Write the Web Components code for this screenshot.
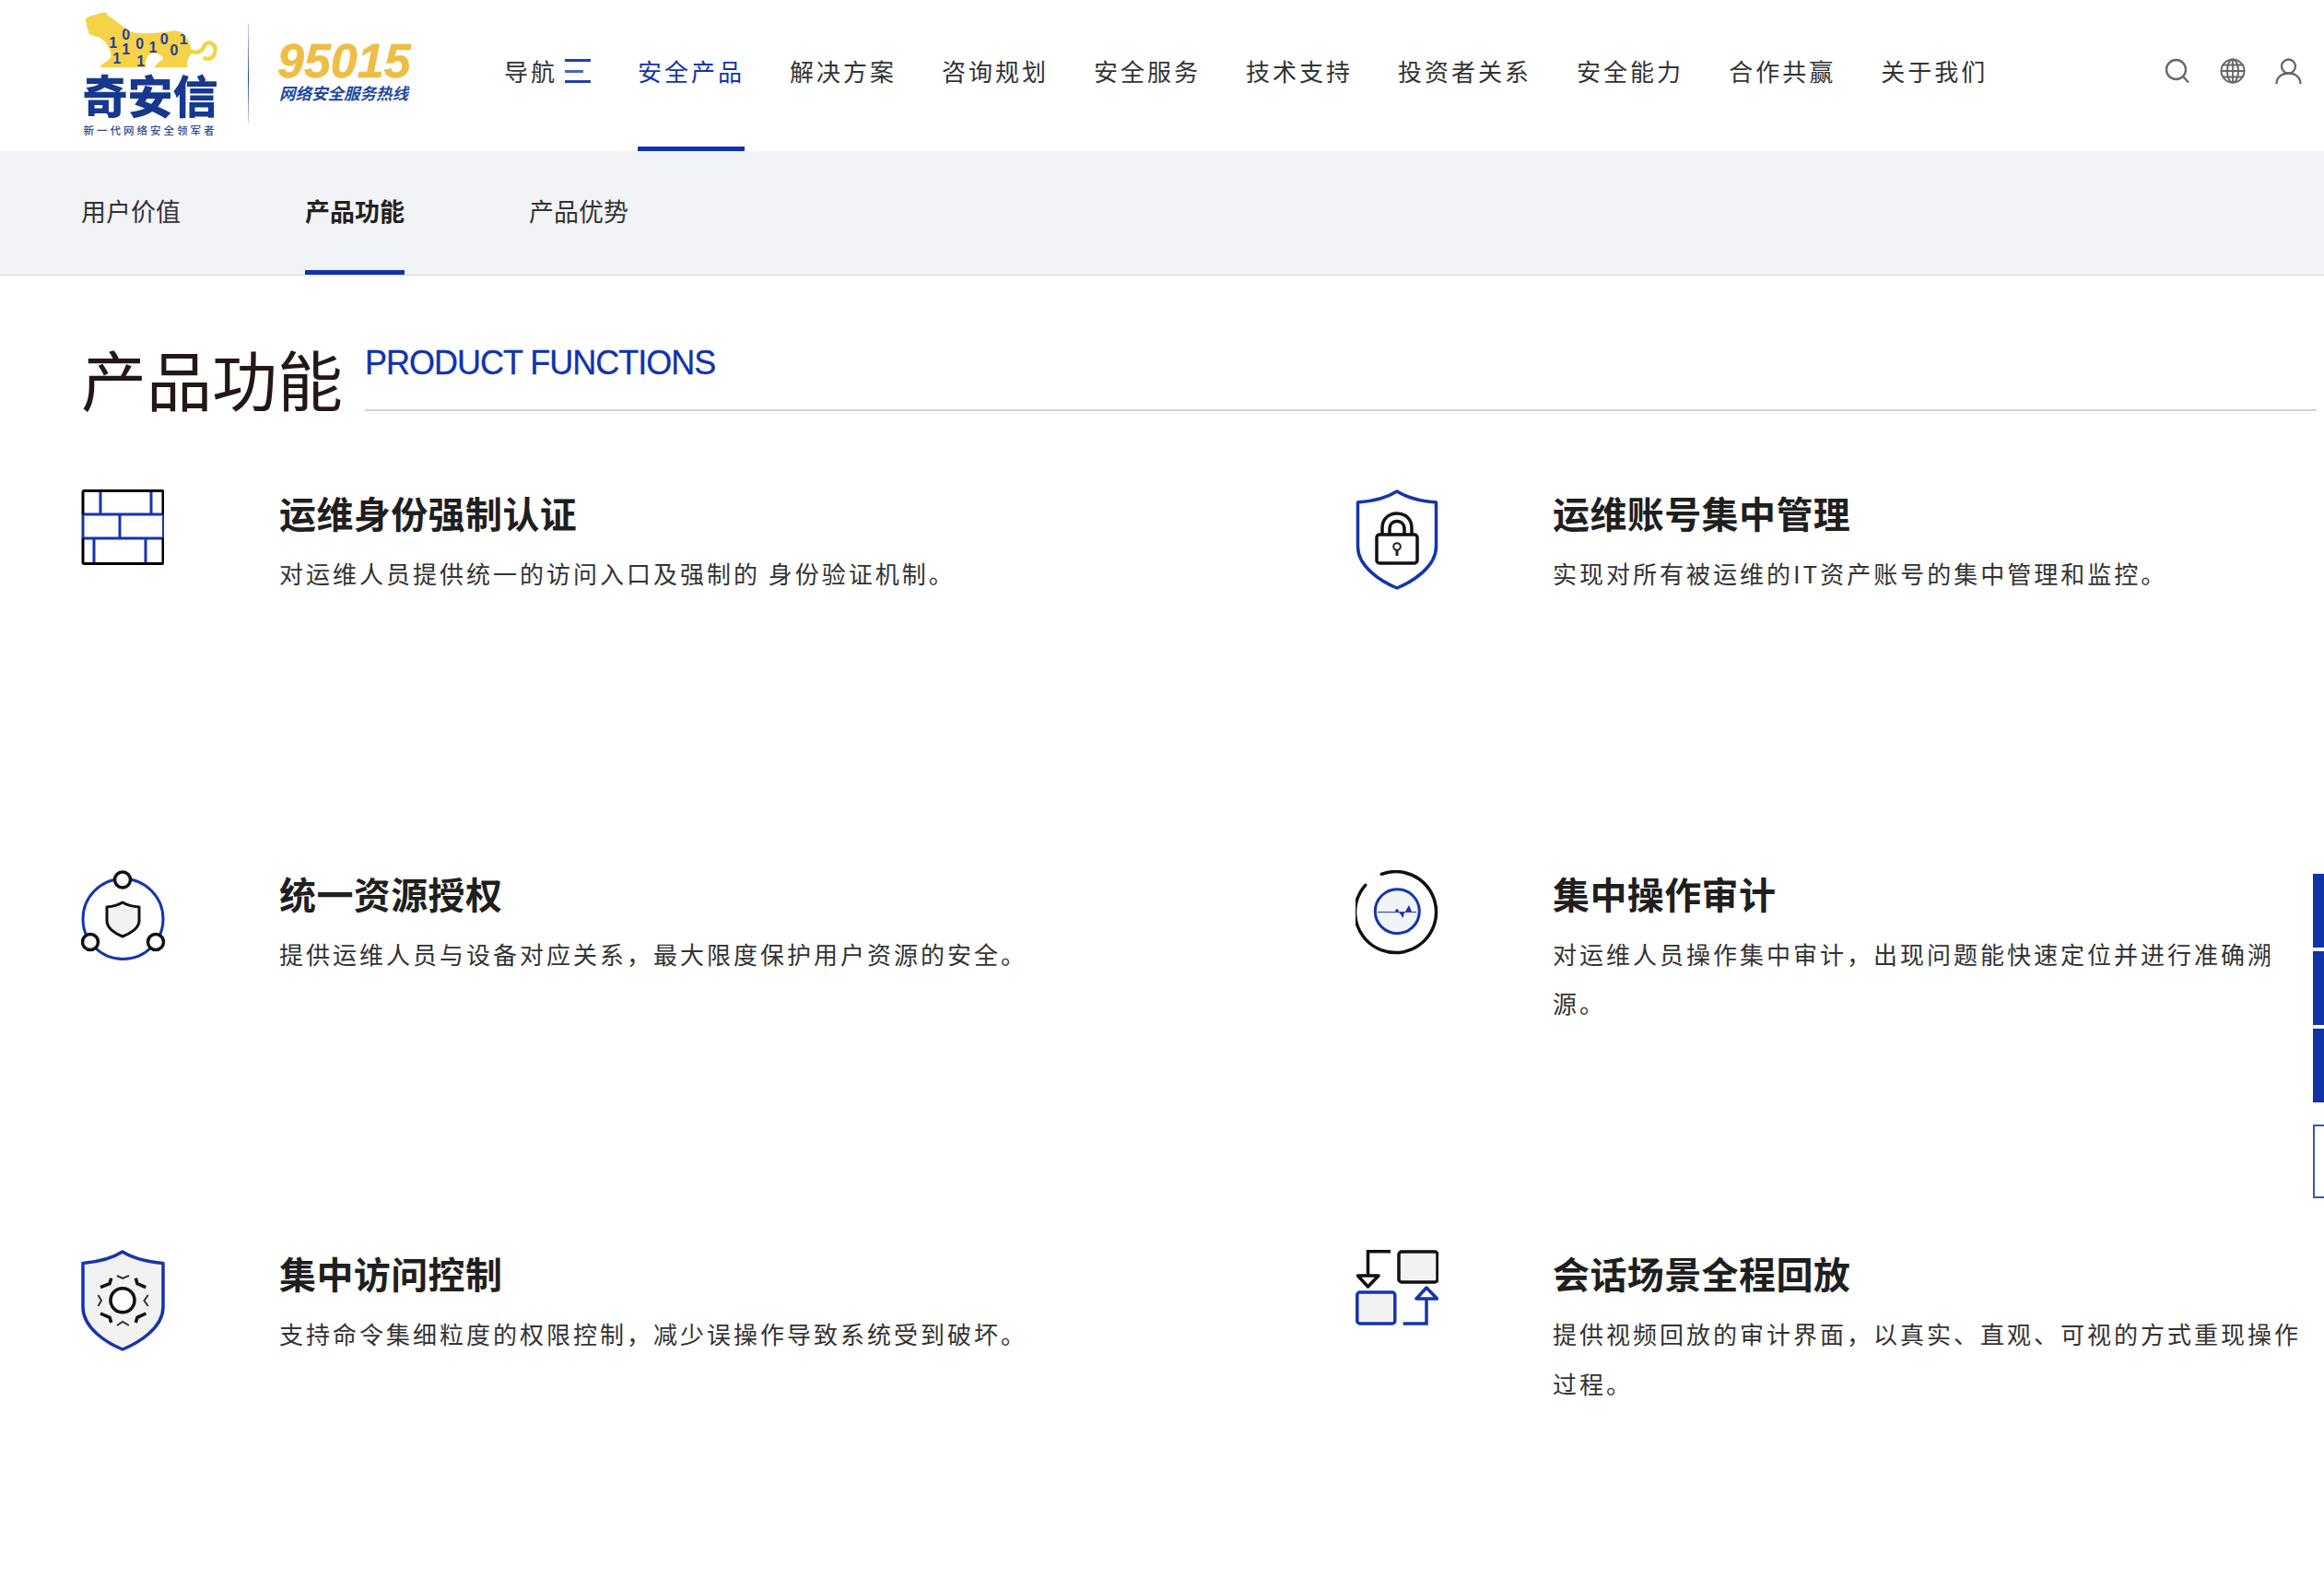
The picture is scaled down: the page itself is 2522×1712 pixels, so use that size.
<!DOCTYPE html>
<html lang="zh-CN">
<head>
<meta charset="utf-8">
<title>产品功能</title>
<style>
  html, body { margin: 0; padding: 0; background: #fff; }
  body { width: 2522px; height: 1712px; overflow: hidden; position: relative; color: #333;
         font-family: "Liberation Sans", "Noto Sans CJK SC", sans-serif; }
</style>
</head>
<body>
<qax-header>
  <qax-logo slot="logo"></qax-logo>
  <qax-nav-item menu>导航</qax-nav-item>
  <qax-nav-item active>安全产品</qax-nav-item>
  <qax-nav-item>解决方案</qax-nav-item>
  <qax-nav-item>咨询规划</qax-nav-item>
  <qax-nav-item>安全服务</qax-nav-item>
  <qax-nav-item>技术支持</qax-nav-item>
  <qax-nav-item>投资者关系</qax-nav-item>
  <qax-nav-item>安全能力</qax-nav-item>
  <qax-nav-item>合作共赢</qax-nav-item>
  <qax-nav-item>关于我们</qax-nav-item>
</qax-header>

<qax-subnav>
  <qax-sub-item>用户价值</qax-sub-item>
  <qax-sub-item active>产品功能</qax-sub-item>
  <qax-sub-item>产品优势</qax-sub-item>
</qax-subnav>

<qax-section-title en="PRODUCT FUNCTIONS">产品功能</qax-section-title>

<qax-feature-grid>
  <qax-feature heading="运维身份强制认证">
    <svg slot="icon" width="90" height="82" viewBox="0 0 90 82" fill="none">
      <path d="M21 2V27M76 2V27M42 27V53M14 53V80M70 53V80M2 27H89M2 53H89M2 27V53" stroke="#1535ae" stroke-width="3"/>
      <path d="M2 27V3a1.5 1.5 0 0 1 1.5-1.500H87.500A1.500 1.500 0 0 1 89 3V27M89 53V79a1.500 1.500 0 0 1-1.500 1.500H3.500A1.500 1.500 0 0 1 2 79V53" stroke="#000" stroke-width="3"/>
      <path d="M89 27V53" stroke="#1535ae" stroke-width="2"/>
    </svg>
    对运维人员提供统一的访问入口及强制的 身份验证机制。
  </qax-feature>
  <qax-feature heading="运维账号集中管理">
    <svg slot="icon" width="90" height="110" viewBox="0 0 90 110" fill="none" style="margin-left:1px">
      <path d="M45 2C34 9 18 13 2.500 14V62C2.500 84 28 100 45 107C62 100 87.500 84 87.500 62V14C72 13 56 9 45 2Z" stroke="#1535ae" stroke-width="3.500" stroke-linejoin="round"/>
      <rect x="23" y="49" width="44" height="31" rx="3" stroke="#111" stroke-width="3.500"/>
      <path d="M29 48V42C29 32 36 26 45 26S61 32 61 42V48M37 48V43C37 38 40 34.500 45 34.500S53 38 53 43V48" stroke="#111" stroke-width="3.500"/>
      <circle cx="45" cy="62" r="3.800" stroke="#222" stroke-width="2"/>
      <path d="M45 66V72" stroke="#222" stroke-width="3"/>
    </svg>
    实现对所有被运维的IT资产账号的集中管理和监控。
  </qax-feature>
  <qax-feature heading="统一资源授权">
    <svg slot="icon" width="92" height="98" viewBox="0 0 92 98" fill="none">
      <circle cx="45.500" cy="53" r="43.500" stroke="#1535ae" stroke-width="3"/>
      <circle cx="45" cy="10.500" r="8.500" fill="#fff" stroke="#111" stroke-width="3.500"/>
      <circle cx="10" cy="78" r="8.500" fill="#fff" stroke="#111" stroke-width="3.500"/>
      <circle cx="81" cy="78" r="8.500" fill="#fff" stroke="#111" stroke-width="3.500"/>
      <path d="M45 35C40 38 34 39.500 28 40V55C28 63 37 69 45 72C53 69 63 63 63 55V40C57 39.500 50 38 45 35Z" fill="#f2f2f2" stroke="#111" stroke-width="3" stroke-linejoin="round"/>
    </svg>
    提供运维人员与设备对应关系，最大限度保护用户资源的安全。
  </qax-feature>
  <qax-feature heading="集中操作审计">
    <svg slot="icon" width="90" height="92" viewBox="0 0 90 92" fill="none" style="margin-left:1px">
      <path d="M28.300 4.300A44 44 0 1 1 10.700 16.300" stroke="#111" stroke-width="3.500" stroke-linecap="round"/>
      <circle cx="45.300" cy="44.700" r="24" fill="#f2f3f7" stroke="#1535ae" stroke-width="3"/>
      <path d="M24 45.600H66" stroke="#1535ae" stroke-width="1"/>
      <circle cx="45" cy="44" r="1.800" fill="#1535ae"/>
      <path d="M47.500 46L51.500 52L53 46ZM54 45L58 38L61 45Z" fill="#1535ae"/>
    </svg>
    对运维人员操作集中审计，出现问题能快速定位并进行准确溯源。
  </qax-feature>
  <qax-feature heading="集中访问控制">
    <svg slot="icon" width="92" height="112" viewBox="0 0 92 112" fill="none">
      <path d="M45 2C34 9 18 13 2 14.500V62C2 85 28 101 45 108C62 101 89 85 89 62V14.500C72 13 56 9 45 2Z" fill="#f2f2f2" stroke="#1535ae" stroke-width="3.500" stroke-linejoin="round"/>
      <circle cx="45" cy="54.700" r="13" fill="#fff" stroke="#111" stroke-width="3.500"/>
      <g stroke="#111" stroke-width="3.500">
        <path d="M21 40.700L31 36.700L32.700 30.700M59.300 30.700L61 36.700L70.300 40.700M21 69L31 73.300L32.700 79M70.300 69L61 73.300L59.300 79"/>
      </g>
      <g stroke="#333" stroke-width="2">
        <path d="M39 28L45 31L52 28M39 82L45 78L52 82M18.500 49L22 55L18.500 61M72.700 49L68.500 55L72.700 61"/>
      </g>
    </svg>
    支持命令集细粒度的权限控制，减少误操作导致系统受到破坏。
  </qax-feature>
  <qax-feature heading="会话场景全程回放">
    <svg slot="icon" width="90" height="84" viewBox="0 0 90 84" fill="none" style="margin-left:1px">
      <rect x="47" y="2" width="42" height="33" rx="3" fill="#f2f2f2" stroke="#111" stroke-width="3.500"/>
      <rect x="1.800" y="46" width="41" height="34" rx="3" fill="#f2f2f2" stroke="#1535ae" stroke-width="3.500"/>
      <path d="M38 1.800H13.500V27.500" stroke="#111" stroke-width="3.500"/>
      <path d="M2.500 28H25L13.500 40Z" fill="#fff" stroke="#111" stroke-width="3.500" stroke-linejoin="round"/>
      <path d="M51.700 80H77V53" stroke="#1535ae" stroke-width="3.500"/>
      <path d="M66 53H88.500L77 41Z" fill="#fff" stroke="#1535ae" stroke-width="3.500" stroke-linejoin="round"/>
    </svg>
    提供视频回放的审计界面，以真实、直观、可视的方式重现操作过程。
  </qax-feature>
</qax-feature-grid>

<qax-side-rail></qax-side-rail>

<script>
// Logo: tiger is drawn, all words stay real text
class QaxLogo extends HTMLElement {
  constructor() {
    super()
    this.shadow = this.attachShadow({ mode: 'open' })
  }
  connectedCallback() {
    const tiger = 'M98 62C110 50 135 48 150 42L165 40L172 52C195 62 225 95 250 105C290 112 340 108 385 100C410 100 430 115 440 150L445 172C430 190 425 205 432 220H322C330 205 345 200 352 190C345 175 325 170 310 175C295 185 290 205 295 220H145C150 205 175 200 182 185C182 165 170 140 150 125C130 115 112 118 108 105C105 90 100 75 98 62Z'
    const digits = [[188,155],[230,128,0],[230,178],[275,160,0],[318,172],[355,145,0],[387,180,0],[418,145],[200,208],[278,215]]
    const marks = digits.map(d => `<text x="${(d[0] / 3 - 28).toFixed(1)}" y="${(d[1] / 3 - 12).toFixed(1)}" text-anchor="middle">${d.length > 2 ? 0 : 1}</text>`).join('')
    this.shadow.innerHTML = `
      <style>
        :host { display: flex; align-items: flex-start; width: 459px; height: 164px; box-sizing: border-box; padding-left: 88px; }
        .mark { width: 150px; display: flex; flex-direction: column; align-items: center; padding-top: 12px; }
        svg { display: block; }
        .name { font: 900 49px/50px "Noto Sans CJK SC", sans-serif; color: #17388f; white-space: nowrap; }
        .tag { font: 500 11.500px/14px "Noto Sans CJK SC", sans-serif; color: #2f4a98; letter-spacing: 3px; margin-top: 7px; white-space: nowrap; }
        .rule { width: 1px; height: 108px; margin: 26px 0 0 31px; background: linear-gradient(#cfd8e8, #27468f 55%, #cfd8e8); }
        .hot { margin-left: 31px; padding-top: 42px; display: flex; flex-direction: column; }
        .num { font: italic 700 52px/48px "Liberation Sans", sans-serif; color: #eebd45; -webkit-text-stroke: .6px #eebd45; white-space: nowrap; }
        .sub { font: italic 700 17.500px/22px "Noto Sans CJK SC", sans-serif; color: #234a9d; margin-left: 2px; white-space: nowrap; }
      </style>
      <div class="mark">
        <svg width="150" height="65" viewBox="0 0 150 65">
          <defs><clipPath id="body"><path transform="translate(-28 -12) scale(.3333)" d="${tiger}"/></clipPath></defs>
          <g transform="translate(-28 -12) scale(.3333)">
            <path fill="#f5d247" d="${tiger}"/>
            <path fill="none" stroke="#f5d247" stroke-width="13" d="M436 165C462 178 480 165 485 150C495 130 525 140 520 170C516 190 498 196 482 188"/>
          </g>
          <g clip-path="url(#body)" fill="#1f4199" font-family="Liberation Sans, sans-serif" font-weight="700" font-size="16">${marks}</g>
        </svg>
        <div class="name">奇安信</div>
        <div class="tag">新一代网络安全领军者</div>
      </div>
      <div class="rule"></div>
      <div class="hot">
        <div class="num">95015</div>
        <div class="sub">网络安全服务热线</div>
      </div>`
  }
}

class QaxHeader extends HTMLElement {
  constructor() {
    super()
    this.shadow = this.attachShadow({ mode: 'open' })
  }
  connectedCallback() {
    this.shadow.innerHTML = `
      <style>
        :host { display: flex; height: 164px; background: #fff; align-items: stretch; }
        nav { display: flex; gap: 49px; margin-left: 88px; }
        .tools { margin-left: auto; display: flex; gap: 32px; padding: 63px 24px 0 0; align-items: flex-start; }
        svg { display: block; }
      </style>
      <slot name="logo"></slot>
      <nav><slot></slot></nav>
      <div class="tools">
        <svg width="28" height="28" viewBox="0 0 28 28" fill="none" stroke="#666" stroke-width="2.300">
          <circle cx="12.500" cy="12.500" r="10.500"/><path d="M20 20L26 26.500"/>
        </svg>
        <svg width="28" height="28" viewBox="0 0 28 28" fill="none" stroke="#666" stroke-width="2">
          <circle cx="14" cy="14" r="12.500"/><ellipse cx="14" cy="14" rx="6" ry="12.500"/>
          <path d="M14 1.500V26.500M1.500 14H26.500M4 7.500H24M4 20.500H24" stroke-width="1.800"/>
        </svg>
        <svg width="29" height="29" viewBox="0 0 29 29" fill="none" stroke="#666" stroke-width="2.300">
          <circle cx="14.500" cy="9" r="7.500"/><path d="M1.500 28C1.500 21 7 16.500 14.500 16.500S27.500 21 27.500 28"/>
        </svg>
      </div>`
  }
}

class QaxNavItem extends HTMLElement {
  constructor() {
    super()
    this.shadow = this.attachShadow({ mode: 'open' })
  }
  connectedCallback() {
    const bars = this.hasAttribute('menu') ? '<i class="bars"><b></b><b class="m"></b><b></b></i>' : ''
    this.shadow.innerHTML = `
      <style>
        :host { display: flex; align-items: flex-start; box-sizing: border-box; height: 164px; padding-top: 58px;
                font: 400 26px/38px "Noto Sans CJK SC", sans-serif; letter-spacing: 3px; color: #333; white-space: nowrap; }
        :host([active]) { color: #1033ad; border-bottom: 5px solid #1033ad; }
        .bars { display: flex; flex-direction: column; justify-content: space-between; width: 28px; height: 26px; margin: 6px 0 0 8px; }
        .bars b { display: block; height: 3px; background: #1e3fb0; }
        .bars .m { width: 20px; background: #4a63bd; }
        :host([menu]) { margin-right: 2px; }
      </style>
      <slot></slot>${bars}`
  }
}

class QaxSubnav extends HTMLElement {
  constructor() {
    super()
    this.attachShadow({ mode: 'open' }).innerHTML = `
      <style>
        :host { display: flex; gap: 135px; height: 135px; box-sizing: border-box; padding-left: 88px;
                background: #f2f3f7; border-bottom: 1px solid #d4d6dc; }
      </style>
      <slot></slot>`
  }
}

class QaxSubItem extends HTMLElement {
  constructor() {
    super()
    this.attachShadow({ mode: 'open' }).innerHTML = `
      <style>
        :host { display: block; box-sizing: border-box; height: 134px; padding-top: 45px;
                font: 400 27px/40px "Noto Sans CJK SC", sans-serif; color: #333; white-space: nowrap; }
        :host([active]) { font-weight: 700; color: #222; border-bottom: 5px solid #1033ad; }
      </style>
      <slot></slot>`
  }
}

class QaxSectionTitle extends HTMLElement {
  constructor() {
    super()
    this.shadow = this.attachShadow({ mode: 'open' })
  }
  connectedCallback() {
    this.shadow.innerHTML = `
      <style>
        :host { display: flex; padding: 60px 8px 0 88px; height: 149px; box-sizing: border-box; }
        h2 { margin: 0; font: 400 71px/100px "Noto Sans CJK SC", sans-serif; color: #231815; width: 308px; white-space: nowrap; }
        .en { flex: 1; height: 85px; border-bottom: 2px solid #d2d2d2; font: 400 36px/70px "Liberation Sans", sans-serif; color: #1033ad; letter-spacing: -1px; -webkit-text-stroke: .3px #1033ad; white-space: nowrap; }
      </style>
      <h2><slot></slot></h2>
      <div class="en">${this.getAttribute('en')}</div>`
  }
}

class QaxFeatureGrid extends HTMLElement {
  constructor() {
    super()
    this.attachShadow({ mode: 'open' }).innerHTML = `
      <style>
        :host { display: grid; grid-template-columns: 1382px 1fr; grid-auto-rows: 412.500px; padding: 83px 8px 0 88px; }
      </style>
      <slot></slot>`
  }
}

class QaxFeature extends HTMLElement {
  constructor() {
    super()
    this.shadow = this.attachShadow({ mode: 'open' })
  }
  connectedCallback() {
    this.shadow.innerHTML = `
      <style>
        :host { display: flex; align-items: flex-start; }
        .ic { width: 215px; flex: none; }
        ::slotted(svg) { display: block; }
        .tx { width: 830px; margin-top: -2px; }
        h3 { margin: 0 0 12px; font: 700 40px/54px "Noto Sans CJK SC", sans-serif; letter-spacing: .4px; color: #1f1f1f; white-space: nowrap; }
        p { margin: 0; font: 400 26px/53.500px "Noto Sans CJK SC", sans-serif; letter-spacing: 3px; color: #333; }
      </style>
      <div class="ic"><slot name="icon"></slot></div>
      <div class="tx">
        <h3>${this.getAttribute('heading')}</h3>
        <p><slot></slot></p>
      </div>`
  }
}

// right edge floating tabs, clipped by the window
class QaxSideRail extends HTMLElement {
  constructor() {
    super()
    this.attachShadow({ mode: 'open' }).innerHTML = `
      <style>
        :host { position: absolute; right: 0; top: 948px; width: 12px; display: flex; flex-direction: column; }
        div { height: 80px; background: #1033a8; margin-bottom: 4px; }
        .o { background: #fff; border: 2px solid #3a55b8; border-right: 0; box-sizing: border-box; margin: 20px 0 0; }
      </style>
      <div></div><div></div><div></div><div class="o"></div>`
  }
}

customElements.define('qax-logo', QaxLogo)
customElements.define('qax-header', QaxHeader)
customElements.define('qax-nav-item', QaxNavItem)
customElements.define('qax-subnav', QaxSubnav)
customElements.define('qax-sub-item', QaxSubItem)
customElements.define('qax-section-title', QaxSectionTitle)
customElements.define('qax-feature-grid', QaxFeatureGrid)
customElements.define('qax-feature', QaxFeature)
customElements.define('qax-side-rail', QaxSideRail)
</script>
</body>
</html>
